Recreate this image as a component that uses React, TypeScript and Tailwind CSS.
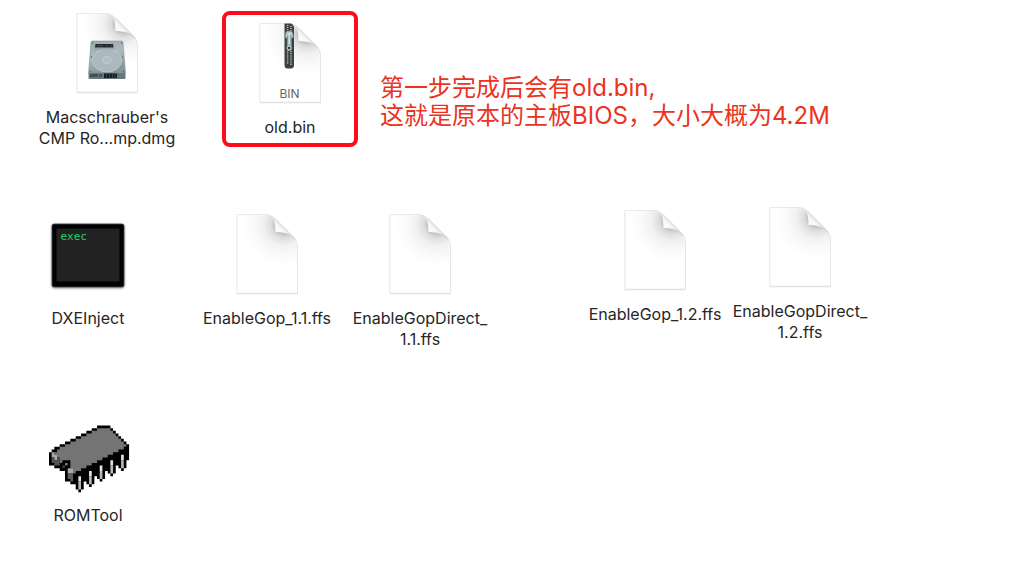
import type { ReactNode } from 'react';
import clsx from 'clsx';

interface FileItemProps {
  icon: ReactNode;
  lines: string[];
  className: string;
}

const CHIP_COLS = 30;
const CHIP_ROWS = 26;
const CHIP_LEGS = [11, 15, 19, 23, 27];

// Blank sheet of paper with the top right corner folded over
function Page({ id }: { id: string }) {
  return (
    <g transform="translate(14 0.5)">
      <defs>
        <radialGradient id={`${id}-shade`} gradientUnits="userSpaceOnUse" cx="47" cy="10" r="42">
          <stop offset="0" stopColor="#b0b0b0" />
          <stop offset="0.2" stopColor="#c0c0c0" />
          <stop offset="0.32" stopColor="#dedede" />
          <stop offset="0.5" stopColor="#f1f1f1" />
          <stop offset="0.75" stopColor="#fafafa" />
          <stop offset="1" stopColor="#ffffff" />
        </radialGradient>
        <linearGradient id={`${id}-fold`} gradientUnits="userSpaceOnUse" x1="38" y1="19" x2="47" y2="10">
          <stop offset="0" stopColor="#ffffff" />
          <stop offset="0.6" stopColor="#f7f7f7" />
          <stop offset="1" stopColor="#d2d2d2" />
        </linearGradient>
        <filter id={`${id}-drop`} x="-10%" y="-10%" width="120%" height="120%">
          <feDropShadow dx="0" dy="0.4" stdDeviation="0.7" floodColor="#000" floodOpacity="0.35" />
        </filter>
      </defs>
      <path
        d="M0 0H27C33 0 36 2 40 6L55 21C59 25 60.500 28 60.500 34V78.500H0Z"
        fill={`url(#${id}-shade)`}
        stroke="#dedede"
        strokeWidth="0.5"
        filter={`url(#${id}-drop)`}
      />
      <path
        d="M31 .500C37 2 38.500 7 38.500 18C48 18 55 20 59 27C58 24 57 23 55 21L40 6C37 3 35 1 31 .500Z"
        fill={`url(#${id}-fold)`}
      />
      <path d="M38.500 18C48 18 54 20 58 25" fill="none" stroke="#b5b5b5" strokeWidth="0.6" />
    </g>
  );
}

function Icon({ children }: { children: ReactNode }) {
  return (
    <svg className="h-20 w-[88px] shrink-0 overflow-visible" viewBox="0 0 88 80" aria-hidden="true">
      {children}
    </svg>
  );
}

function BlankIcon({ id }: { id: string }) {
  return (
    <Icon>
      <Page id={id} />
    </Icon>
  );
}

function DiskIcon() {
  return (
    <Icon>
      <Page id="dmg" />
      <defs>
        <linearGradient id="disk-top" x1="0" y1="0" x2="0.3" y2="1">
          <stop offset="0" stopColor="#98a8ae" />
          <stop offset="0.5" stopColor="#adbbc1" />
          <stop offset="1" stopColor="#87979e" />
        </linearGradient>
      </defs>
      <path d="M25.500 60L28 29Q28.200 28 29.500 28H58.500Q59.800 28 60 29L62.500 60Z" fill="url(#disk-top)" stroke="#7b898e" strokeWidth="0.5" />
      <ellipse cx="44" cy="47.500" rx="14.500" ry="11.500" fill="#abb9bf" stroke="#c5d1d5" strokeWidth="0.6" />
      <ellipse cx="44" cy="47" rx="4.200" ry="3.500" fill="#b2c0c5" stroke="#cbd6da" strokeWidth="0.6" />
      <path d="M32 34.500L32.500 31H50L50.500 34.500Z" fill="#20282b" />
      <path d="M34 32.700h6M43 32.700h2M47 32.700h2" stroke="#59646a" strokeWidth="0.7" />
      <path d="M31 36h21" stroke="#7b8a90" strokeWidth="0.6" />
      <path d="M25.500 60H62.500V65Q62.500 66 61.500 66H26.500Q25.500 66 25.500 65Z" fill="#6b767b" />
      <path d="M27 62.500h8M36 62.500h3" stroke="#465055" strokeWidth="3" />
      <path d="M41 60.500h13v4.500H41z" fill="#171c1f" />
      <path d="M43.500 60.500v4.500M46.500 60.500v4.500M49.500 60.500v4.500M52 60.500v4.500" stroke="#636e72" strokeWidth="0.5" />
      <g fill="#52636a">
        <circle cx="29.500" cy="30" r="0.7" />
        <circle cx="58.500" cy="30" r="0.7" />
        <circle cx="28.500" cy="44" r="0.7" />
        <circle cx="59.500" cy="44" r="0.7" />
        <circle cx="27.500" cy="58.500" r="0.7" />
        <circle cx="60.500" cy="58.500" r="0.7" />
      </g>
    </Icon>
  );
}

function ZipIcon() {
  return (
    <Icon>
      <Page id="bin" />
      <path d="M38.500 0.500H45Q48 2 48 5V42Q48 45.500 45 45.500H41.500Q38.500 45.500 38.500 42Z" fill="#3c4042" />
      <path d="M41.700 2V42M44.900 3V42" stroke="#cfd4d5" strokeWidth="1.500" strokeDasharray="1 1.100" />
      <path d="M43.300 2V43" stroke="#303436" strokeWidth="0.8" />
      <path d="M40 9Q43.200 7 46.500 9L47.500 14L45 16H41.500L39 14Z" fill="#b8c8cc" stroke="#718388" strokeWidth="0.6" />
      <path d="M41.500 13H45L45.500 23Q46.500 28 43.200 28Q40 28 41 23Z" fill="#a5b8be" stroke="#607278" strokeWidth="0.6" />
      <path d="M43.200 10V21" stroke="#e1eaeb" strokeWidth="1.200" />
      <circle cx="43.200" cy="25" r="1.700" fill="#252b2d" stroke="#dce4e5" strokeWidth="0.8" />
      <text x="43.500" y="75" textAnchor="middle" className="fill-[#666666] font-[Inter,sans-serif] text-[12px]">
        BIN
      </text>
    </Icon>
  );
}

function ExecIcon() {
  return (
    <Icon>
      <defs>
        <filter id="exec-drop" x="-10%" y="-10%" width="120%" height="125%">
          <feDropShadow dx="0" dy="0.8" stdDeviation="0.9" floodColor="#000" floodOpacity="0.5" />
        </filter>
      </defs>
      <rect x="8" y="10" width="72" height="63" rx="2" fill="#050505" stroke="#35474c" strokeWidth="0.8" filter="url(#exec-drop)" />
      <rect x="12.500" y="14.500" width="63" height="53" fill="#222222" />
      <text x="16.500" y="26" className="fill-[#22d36b] font-['DejaVu_Sans_Mono',monospace] text-[11px]">
        exec
      </text>
    </Icon>
  );
}

// Colour of one cell of the pixel-art chip, or null where it is empty
function chipPixel(x: number, y: number): string | null {
  // each leg is a bright strip inside a black outline
  for (const leg of CHIP_LEGS) {
    const top = 19 - (leg - 11) / 2;
    if (x === leg && y >= top && y < top + 6) {
      if (y === top + 5) return '#000000';
      return y < top + 2 ? '#e4e4e4' : '#b8b8b8';
    }
    if (Math.abs(x - leg) === 1 && y >= top && y < top + 5) return '#000000';
  }

  if (y === 0) return x >= 18 && x <= 22 ? '#000000' : null;
  const left = y <= 8 ? 18 - 2 * y : y === 9 ? 1 : 0;
  const right = Math.min(22 + y, 29);
  if (x < left || x > right) return null;

  // long side, in shadow
  const front = 27 - 2 * (y - 8);
  if (y >= 8 && x > Math.max(front, 8)) {
    return y <= Math.min(21, 12 + Math.floor((29 - x) / 2)) ? '#000000' : null;
  }

  // short side, split by the notch
  if (y >= 9 && x < 9) {
    const bottom = 14 + Math.floor(x / 2) + (x > 5 ? 3 : 0);
    if (y > Math.min(bottom, 21)) return null;
    if (x === 0 || y === bottom) return '#000000';
    if (y === 13 && x >= 5 && x <= 7) return '#000000';
    if (x === 4 && y >= 14) return '#000000';
    if (x === 5 && y >= 14) return y === 14 ? '#000000' : '#3c3c3c';
    if (x === 6 && y >= 15) return '#000000';
    if (x === 7 && (y === 14 || y === 15)) return '#000000';
    if (x <= 3) {
      const edge = 10 + Math.floor(x * 0.8);
      if (y >= edge) return y <= edge + 1 && x < 3 ? '#a9a9a9' : '#555555';
    }
    if (x >= 7 && y >= 16) return y <= 17 ? '#a9a9a9' : '#5c5c5c';
  }

  if (y <= 9 && x <= left + 1) return '#000000';
  if (y <= 7 && x === 22 + y) return '#000000';
  return '#747474';
}

// One path per colour, on top of a black silhouette, so that no seams show
function chipPaths(): [string, string][] {
  const paths = new Map<string, string>([['#000000', '']]);
  for (let y = 0; y < CHIP_ROWS; y++) {
    for (let x = 0; x < CHIP_COLS; x++) {
      const fill = chipPixel(x, y);
      if (!fill) continue;
      const cell = `M${x} ${y}h1v1h-1z`;
      paths.set('#000000', paths.get('#000000') + cell);
      if (fill !== '#000000') paths.set(fill, (paths.get(fill) ?? '') + cell);
    }
  }
  return [...paths];
}

function ChipIcon() {
  return (
    <Icon>
      <g transform="translate(5 14.5) scale(2.67)">
        {chipPaths().map(([fill, d]) => (
          <path key={fill} d={d} fill={fill} />
        ))}
      </g>
    </Icon>
  );
}

function FileItem({ icon, lines, className }: FileItemProps) {
  return (
    <figure className={clsx('absolute flex flex-col items-center gap-[14px]', className)}>
      {icon}
      <figcaption className="text-center text-base leading-[21px] whitespace-nowrap">
        {lines.map((line) => (
          <span key={line} className="block">
            {line}
          </span>
        ))}
      </figcaption>
    </figure>
  );
}

export default function App() {
  return (
    <main className="relative min-h-screen overflow-hidden bg-white font-[Inter,'Noto_Sans_CJK_SC',sans-serif] text-[#262626]">
      <FileItem icon={<DiskIcon />} lines={["Macschrauber's", 'CMP Ro...mp.dmg']} className="top-[13px] left-[35px] w-36" />
      <FileItem
        icon={<ZipIcon />}
        lines={['old.bin']}
        className="top-[11px] left-[222px] w-[136px] rounded-lg border-4 border-[#fc0d1b] pt-2 pb-[5px]"
      />
      <p className="absolute top-[74px] left-[380px] text-2xl leading-7 whitespace-nowrap text-[#ea3323]">
        第一步完成后会有old.bin,
        <br />
        这就是原本的主板BIOS，大小大概为4.2M
      </p>

      <FileItem icon={<ExecIcon />} lines={['DXEInject']} className="top-[214px] left-[16px] w-36" />
      <FileItem icon={<BlankIcon id="gop11" />} lines={['EnableGop_1.1.ffs']} className="top-[214px] left-[195px] w-36" />
      <FileItem icon={<BlankIcon id="direct11" />} lines={['EnableGopDirect_', '1.1.ffs']} className="top-[214px] left-[348px] w-36" />
      <FileItem icon={<BlankIcon id="gop12" />} lines={['EnableGop_1.2.ffs']} className="top-[210px] left-[583px] w-36" />
      <FileItem icon={<BlankIcon id="direct12" />} lines={['EnableGopDirect_', '1.2.ffs']} className="top-[207px] left-[728px] w-36" />

      <FileItem icon={<ChipIcon />} lines={['ROMTool']} className="top-[411px] left-[16px] w-36" />
    </main>
  );
}
